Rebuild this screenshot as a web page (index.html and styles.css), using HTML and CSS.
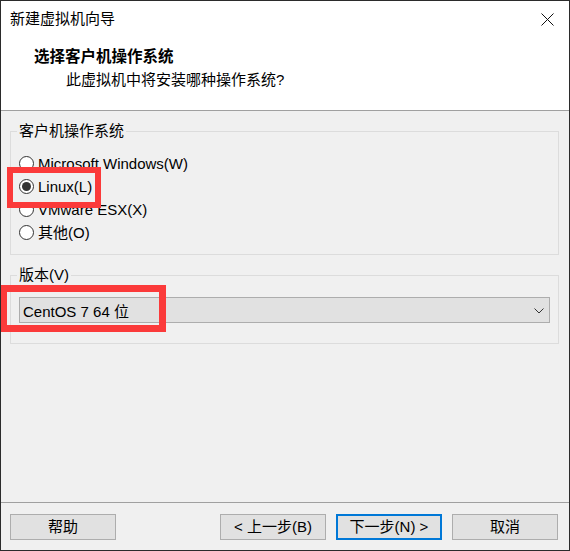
FILE: index.html
```html
<!DOCTYPE html>
<html lang="zh-CN">
<head>
<meta charset="utf-8">
<title>新建虚拟机向导</title>
<link rel="stylesheet" href="styles.css">
</head>
<body>
<div class="window">
  <div class="top">
    <div class="titlebar">
      <span class="title">新建虚拟机向导</span>
      <svg class="close" width="13" height="13" viewBox="0 0 13 13"><path d="M0.5 0.5 L12.5 12.5 M12.5 0.5 L0.5 12.5" stroke="#111" stroke-width="1" fill="none"/></svg>
    </div>
    <div class="header">
      <div class="h-title">选择客户机操作系统</div>
      <div class="h-sub">此虚拟机中将安装哪种操作系统?</div>
    </div>
  </div>
  <div class="content">
    <fieldset class="group os">
      <legend>客户机操作系统</legend>
      <label class="radio"><span class="circle"></span>Microsoft Windows(W)</label>
      <label class="radio"><span class="circle checked"></span>Linux(L)</label>
      <label class="radio"><span class="circle"></span>VMware ESX(X)</label>
      <label class="radio"><span class="circle"></span>其他(O)</label>
    </fieldset>
    <fieldset class="group ver">
      <legend>版本(V)</legend>
      <div class="select">
        <span>CentOS 7 64 位</span>
        <svg class="chev" width="10" height="6" viewBox="0 0 10 6"><path d="M0.5 0.5 L5 5 L9.5 0.5" stroke="#333" stroke-width="1" fill="none"/></svg>
      </div>
    </fieldset>
  </div>
  <div class="footer">
    <button class="btn">帮助</button>
    <span class="spacer"></span>
    <button class="btn">&lt; 上一步(B)</button>
    <button class="btn default">下一步(N) &gt;</button>
    <button class="btn">取消</button>
  </div>
  <div class="mark mark-linux"></div>
  <div class="mark mark-version"></div>
</div>
</body>
</html>
```
FILE: styles.css
```css
* { box-sizing: border-box; }
html, body { margin: 0; padding: 0; background: #f0f0f0; }
body {
  font-family: "Liberation Sans", "Noto Sans CJK SC", sans-serif;
  font-size: 15px;
  color: #000;
}
.window {
  position: relative;
  width: 570px;
  height: 551px;
  border: 1px solid #2b2b2b;
  display: flex;
  flex-direction: column;
  background: #f0f0f0;
  overflow: hidden;
}
.top { background: #fff; }
.titlebar {
  height: 38px;
  display: flex;
  align-items: center;
  justify-content: space-between;
  padding: 0 15px 2px 9px;
}
.title { font-size: 15px; line-height: 20px; }
.close { display: block; }
.header {
  height: 72px;
  padding: 8px 0 0 33px;
  border-bottom: 1px solid #a0a0a0;
}
.h-title { font-weight: bold; font-size: 15.5px; line-height: 20px; }
.h-sub { padding-left: 32px; line-height: 20px; margin-top: 3px; }
.content {
  flex: 1;
  padding-top: 11px;
  border-bottom: 1px solid #a0a0a0;
}
.group {
  margin: 0 10px 0 9px;
  border: 1px solid #dcdcdc;
  padding: 12px 8px 10px 8px;
  min-width: 0;
}
.group legend {
  padding: 0 2px;
  margin-left: -2px;
  line-height: 18px;
}
.ver { margin-top: 11px; padding-top: 13px; padding-bottom: 20px; }
.radio {
  display: flex;
  align-items: center;
  height: 23px;
  line-height: 23px;
}
.circle {
  flex: none;
  width: 15px;
  height: 15px;
  border: 1px solid #333;
  border-radius: 50%;
  background: #fff;
  margin-right: 4px;
  display: flex;
  align-items: center;
  justify-content: center;
}
.circle.checked::after {
  content: "";
  width: 9px;
  height: 9px;
  border-radius: 50%;
  background: #333;
}
.select {
  height: 26px;
  background: #e1e1e1;
  border: 1px solid #adadad;
  display: flex;
  align-items: center;
  justify-content: space-between;
  padding: 0 5px 0 3px;
}
.chev { display: block; margin-top: 1px; }
.footer {
  height: 47px;
  display: flex;
  align-items: flex-start;
  padding: 11px 11px 0 9px;
  gap: 10px;
}
.spacer { flex: 1; }
.btn {
  width: 106px;
  height: 26px;
  background: #e1e1e1;
  border: 1px solid #adadad;
  font-family: inherit;
  font-size: 15px;
  color: #000;
  padding: 0;
  line-height: 22px;
}
.btn.default { border: 2px solid #0078d7; }
.mark {
  position: absolute;
  border: 6px solid #fb3a3a;
}
.mark-linux { left: 6px; top: 166px; width: 94px; height: 41px; }
.mark-version { left: -1px; top: 284px; width: 166px; height: 47px; border-width: 7px; }
```
